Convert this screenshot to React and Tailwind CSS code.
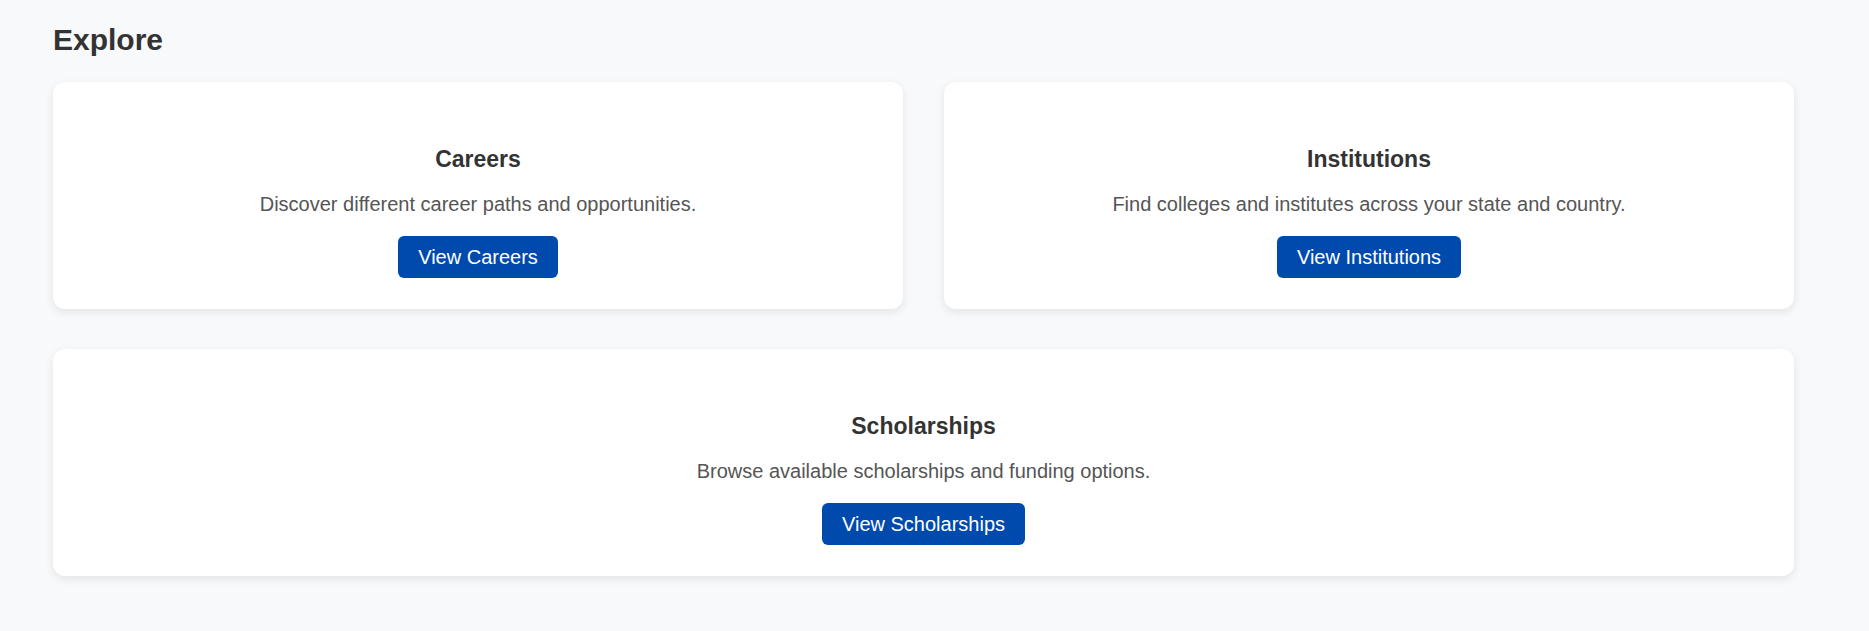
import React from "react";

const cards = [
  {
    title: "Careers",
    text: "Discover different career paths and opportunities.",
    button: "View Careers",
  },
  {
    title: "Institutions",
    text: "Find colleges and institutes across your state and country.",
    button: "View Institutions",
  },
  {
    title: "Scholarships",
    text: "Browse available scholarships and funding options.",
    button: "View Scholarships",
    wide: true,
  },
];

const ExploreCard = ({ card }) => (
  <div
    className={`bg-white rounded-[12px] shadow-[0_3px_10px_rgba(0,0,0,0.09)] flex flex-col items-center text-center pt-[64px] pb-[31px] ${
      card.wide ? "col-span-2" : ""
    }`}
  >
    <h3 className="text-[23px] leading-[26px] font-bold text-[#333333] mb-[21px]">
      {card.title}
    </h3>
    <p className="text-[20px] leading-[23px] text-[#555555] mb-[20px]">{card.text}</p>
    <button className="h-[42px] px-[20px] rounded-[6px] bg-[#004aad] text-white text-[20px] leading-[23px]">
      {card.button}
    </button>
  </div>
);

const App = () => {
  return (
    <div className="min-h-[631px] w-full bg-[#f8f9fa] font-['Liberation_Sans',Arial,sans-serif]">
      <div className="pl-[53px] pt-[22px] w-[1794px]">
        <h2 className="text-[30px] leading-[35px] font-bold text-[#333333] mb-[25px]">Explore</h2>
        <div className="grid grid-cols-2 gap-x-[41px] gap-y-[40px]">
          {cards.map((card) => (
            <ExploreCard key={card.title} card={card} />
          ))}
        </div>
      </div>
    </div>
  );
};

export default App;
